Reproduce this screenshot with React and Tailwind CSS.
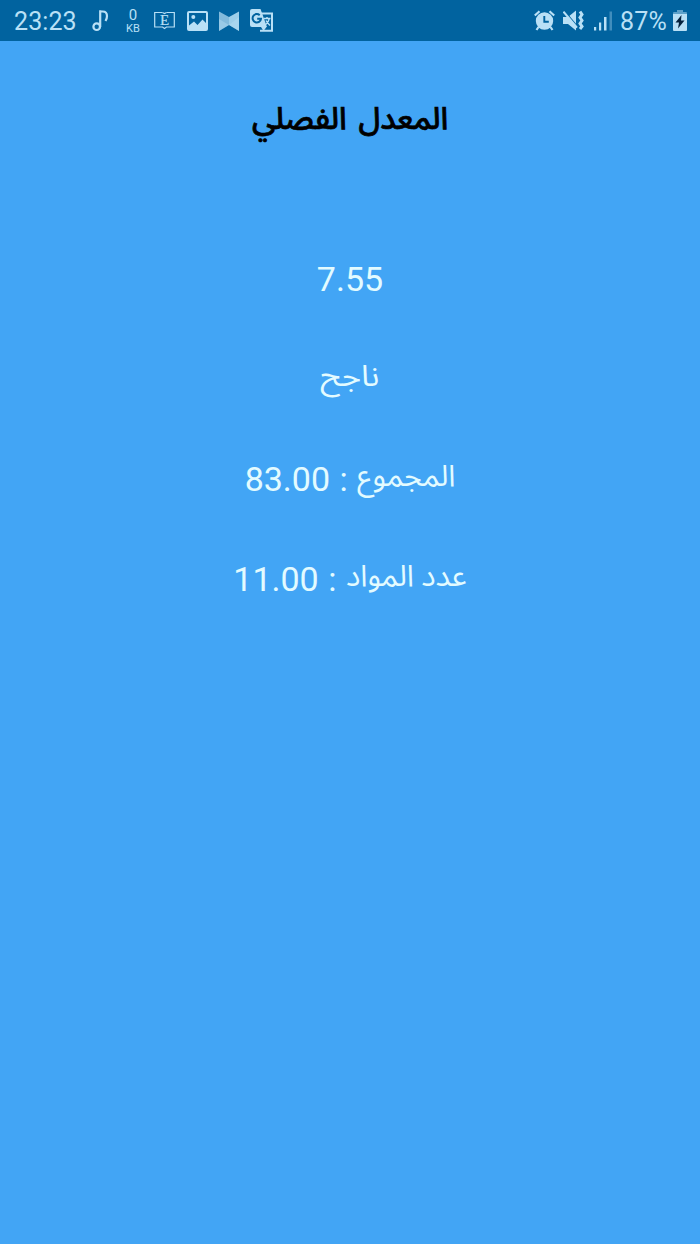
import React from "react";

const NoteIcon = () => (
  <svg className="w-[17px] h-[22px]" viewBox="0 0 17 22" fill="none" stroke="currentColor" strokeWidth="2.200">
    <circle cx="4.700" cy="16.700" r="3.300" />
    <path d="M8.200 17V.3M8.200 1.500h2.500c3 0 4.300 2 4.300 4.500 0 2-.5 3.500-1.500 5" />
  </svg>
);

const ReaderIcon = () => (
  <svg className="w-[21px] h-[19px]" viewBox="0 0 21 19" fill="none" stroke="currentColor">
    <path d="M8.500 1.500H.7V16h7.800l2 1.500 2-1.500h7.800V1.500h-7.800" strokeWidth="1.200" />
    <path d="m8.500 1.500 2 1 2-1" strokeWidth="1.200" />
    <text
      x="10.500"
      y="14"
      textAnchor="middle"
      fill="currentColor"
      strokeWidth=".2"
      fontSize="15"
      fontFamily="Liberation Serif, serif"
    >
      E
    </text>
  </svg>
);

const PictureIcon = () => (
  <svg className="w-[21px] h-[20px]" viewBox="0 0 21 20" fill="currentColor">
    <path
      fillRule="evenodd"
      d="M2 0h17a2 2 0 0 1 2 2v16a2 2 0 0 1-2 2H2a2 2 0 0 1-2-2V2a2 2 0 0 1 2-2zM2 2v12.500l5-4 3.500 3.500 5-5.500L19 12V2z"
    />
    <circle cx="6.300" cy="6" r="2" />
  </svg>
);

const BowIcon = () => (
  <svg className="w-[20px] h-[20px]" viewBox="0 0 20 20" fill="currentColor">
    <path d="M0 .5 10 6v8L0 20z" opacity=".7" />
    <path d="M20 .5 10 6v8l10 6z" opacity=".85" />
    <path d="M0 8 10 14 20 6v14l-10-6L0 20z" opacity=".4" />
  </svg>
);

const TranslateIcon = () => (
  <svg className="w-[24px] h-[23px]" viewBox="0 0 24 23">
    <path d="M11 4.500h11v17.300H10" fill="none" stroke="currentColor" strokeWidth="2" />
    <path d="M2 0h8.500l6.500 18H2a2 2 0 0 1-2-2V2a2 2 0 0 1 2-2z" fill="currentColor" />
    <path d="m11 18 2.500 4 3-4z" fill="currentColor" />
    <path
      d="M9.700 6.200A4.200 4.200 0 1 0 11 9.800H7.200"
      fill="none"
      stroke="#01639f"
      strokeWidth="2"
    />
    <path d="M14 9.500h6.500M17 8v1.500M19.300 9.500c-.5 3-2 5-4 6.500M16 11.500c1 2 2.500 3.500 4 5" fill="none" stroke="currentColor" strokeWidth="1.500" />
  </svg>
);

const AlarmIcon = () => (
  <svg className="w-[21px] h-[21px]" viewBox="0 0 21 21">
    <path d="M.8 5.500 5.500 1.200M20.200 5.500 15.500 1.200M4.500 17 2.500 20M16.500 17l2 3" stroke="currentColor" strokeWidth="2.200" />
    <circle cx="10.500" cy="11" r="8.700" fill="currentColor" />
    <path d="M10.300 6v5.700h4.500" fill="none" stroke="#01639f" strokeWidth="1.900" />
  </svg>
);

const MuteIcon = () => (
  <svg className="w-[22px] h-[21px]" viewBox="0 0 22 21">
    <path d="M0 7h5l8-6.500v20L5 14H0z" fill="currentColor" />
    <path d="m1.500 1 12.500 15" stroke="#01639f" strokeWidth="1.200" />
    <path d="m.5 1.700 13.500 16" stroke="currentColor" strokeWidth="2" />
    <path d="m17 1.500 2 3-2 3 2 3-2 3 2 3-2 2.500" fill="none" stroke="currentColor" strokeWidth="3" />
  </svg>
);

const SignalIcon = () => (
  <svg className="w-[18px] h-[20px]" viewBox="0 0 18 20" fill="currentColor">
    <path d="M0 16h2.200v3.500H0zM5 11.500h2.200v8H5zM10 6h2.500v13.500H10z" />
    <path d="M15.500.5H18v19h-2.500z" opacity=".35" />
  </svg>
);

const BatteryIcon = () => (
  <svg className="w-[14px] h-[21px]" viewBox="0 0 14 21">
    <path d="M4 0h6v2h3a1 1 0 0 1 1 1v2H0V3a1 1 0 0 1 1-1h3z" fill="currentColor" opacity=".5" />
    <path d="M0 4h14v16a1 1 0 0 1-1 1H1a1 1 0 0 1-1-1z" fill="currentColor" />
    <path d="M8.500 5 2.500 12.500H6L5 18.500l6.500-8H8z" fill="#05213c" />
  </svg>
);

const StatusBar = () => (
  <header className="h-[41px] bg-[#01639f] text-[#b9e0f6] flex items-center justify-between pl-[14px] pr-[13px] text-[25px]">
    <div className="flex items-center">
      <span className="w-[63px] leading-[41px] tracking-[0.1px] pt-[2px]">23:23</span>
      <span className="ml-[15px]"><NoteIcon /></span>
      <div className="ml-[15px] w-[18px] flex flex-col items-center pt-[3px]">
        <span className="text-[15px] leading-[13px]">0</span>
        <span className="text-[11px] leading-[13px]">KB</span>
      </div>
      <span className="ml-[12px]"><ReaderIcon /></span>
      <span className="ml-[12px]"><PictureIcon /></span>
      <span className="ml-[11px]"><BowIcon /></span>
      <span className="ml-[11px]"><TranslateIcon /></span>
    </div>
    <div className="flex items-center">
      <AlarmIcon />
      <span className="ml-[8px]"><MuteIcon /></span>
      <span className="ml-[9px]"><SignalIcon /></span>
      <span className="ml-[8px] w-[48px] leading-[41px] pt-[2px] tracking-[0.2px]">87%</span>
      <span className="ml-[5px]"><BatteryIcon /></span>
    </div>
  </header>
);

const rows = [
  { label: "المجموع", value: "83.00" },
  { label: "عدد المواد", value: "11.00" },
];

const App = () => {
  return (
    <div
      style={{ fontFamily: "Roboto, 'Noto Sans Arabic', 'DejaVu Sans', sans-serif" }}
      className="h-[1244px] w-[700px] overflow-hidden bg-[#42a5f5]"
    >
      <StatusBar />
      <main dir="rtl" className="flex flex-col items-center text-[34px] text-[#e3fbff]">
        <h1 className="mt-[28px] h-[100px] leading-[100px] text-[31px] font-medium text-black [word-spacing:4px] [-webkit-text-stroke:0.7px_black]">
          المعدل الفصلي
        </h1>
        <p className="mt-[60px] h-[100px] leading-[100px]">7.55</p>
        <p className="h-[100px] leading-[93px] text-[30px] scale-x-[1.09]">ناجح</p>
        {rows.map((row) => (
          <p
            key={row.label}
            className="h-[100px] flex items-center gap-[9.5px] leading-[100px] whitespace-nowrap"
          >
            <span className="text-[30px] pb-[6px]">{row.label}</span>
            <span>:</span>
            <span>{row.value}</span>
          </p>
        ))}
      </main>
    </div>
  );
};

export default App;
